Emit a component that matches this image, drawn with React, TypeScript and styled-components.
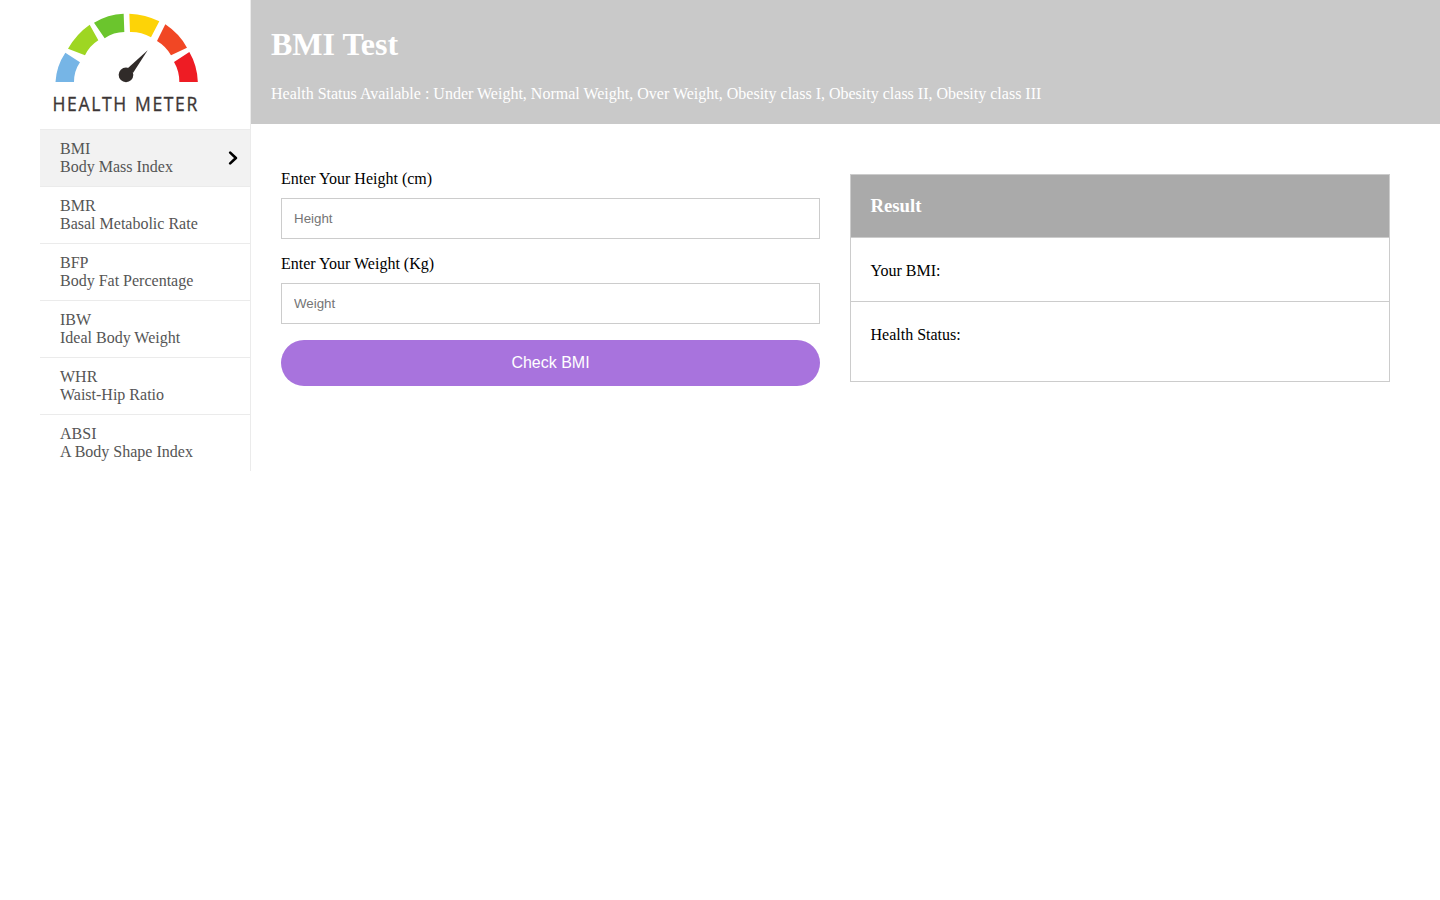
import React from "react";
import styled, { createGlobalStyle } from "styled-components";

const GlobalStyle = createGlobalStyle`
  *, *::before, *::after { box-sizing: border-box; }
  body { margin: 0; background: #fff; color: #000; font: 16px/18px "Liberation Serif", serif; }
`;

const Page = styled.div`
  display: flex;
  align-items: flex-start;
  padding-left: 40px;
`;

const Sidebar = styled.nav`
  flex: 0 0 211px;
  border-right: 1px solid #ebebeb;
`;

const LogoArt = styled.svg`
  display: block;
  width: 210px;
  height: 129px;
`;

const Menu = styled.ul`
  margin: 0;
  padding: 0;
  list-style: none;
`;

const MenuItem = styled.li<{ $active?: boolean }>`
  display: flex;
  align-items: center;
  justify-content: space-between;
  height: 57px;
  padding: 0 12px 0 20px;
  border-top: 1px solid #ebebeb;
  background: ${(p) => (p.$active ? "#f2f2f2" : "#fff")};
  color: #555;
`;

const ItemText = styled.span`
  white-space: pre-line;
`;

const Chevron = styled.svg`
  width: 10px;
  height: 14px;
  fill: none;
  stroke: #000;
  stroke-width: 2.6;
  stroke-linecap: round;
  stroke-linejoin: round;
`;

const Main = styled.main`
  flex: 1;
`;

const Banner = styled.header`
  height: 124px;
  padding: 26px 20px 0;
  background: #c9c9c9;
  color: #fff;
`;

const Title = styled.h1`
  margin: 0 0 23px;
  font-size: 32px;
  line-height: 36px;
`;

const Subtitle = styled.p`
  margin: 0;
`;

const Content = styled.div`
  display: grid;
  grid-template-columns: 539px 1fr;
  align-items: start;
  gap: 30px;
  padding: 46px 50px 0 30px;
`;

const Form = styled.form`
  display: flex;
  flex-direction: column;
`;

const Label = styled.label`
  display: block;
`;

const Input = styled.input`
  height: 41px;
  margin: 10px 0 16px;
  padding: 0 12px;
  border: 1px solid #ccc;
  font: 13.333px "Liberation Sans", sans-serif;
  outline: none;

  &::placeholder { color: #757575; }
`;

const Button = styled.button`
  height: 46px;
  border: 0;
  border-radius: 25px;
  background: #a873dd;
  color: #fff;
  font: 16px "Liberation Sans", sans-serif;
`;

const ResultCard = styled.section`
  margin-top: 4px;
  border: 1px solid #ccc;
`;

const ResultTitle = styled.h3`
  margin: 0;
  padding: 20px 19.5px;
  background: #aaa;
  color: #fff;
  font-size: 18.72px;
  line-height: 22px;
`;

const ResultRow = styled.div<{ $height: number }>`
  height: ${(p) => p.$height}px;
  padding: 24px 19.5px 0;
  border-top: 1px solid #ccc;
`;

const items = [
  ["BMI", "Body Mass Index"],
  ["BMR", "Basal Metabolic Rate"],
  ["BFP", "Body Fat Percentage"],
  ["IBW", "Ideal Body Weight"],
  ["WHR", "Waist-Hip Ratio"],
  ["ABSI", "A Body Shape Index"],
];

function Logo() {
  return (
    <LogoArt viewBox="0 0 630 387" role="img" aria-label="Health Meter">
      <path fill="#76b5e6" d="M46.500 246Q49 198 76 158L120 187Q102 213 102 246Z" />
      <path fill="#9ed622" d="M84 146Q109 102 149 74L175 121Q148 138 135 166Z" />
      <path fill="#6bc52d" d="M162 68Q203 43 251 41L253 96Q221 96 194 115Z" />
      <path fill="#fdd307" d="M268 41Q317 43 358 64L333 112Q303 95 270 96Z" />
      <path fill="#f14724" d="M376 73Q418 101 441 143L393 166Q378 139 351 123Z" />
      <path fill="#ee1c24" d="M448 156Q472 197 473.500 246H418Q418 213 402 186Z" />
      <circle cx="258" cy="224.500" r="22" fill="#302b29" />
      <path fill="#302b29" d="M323 151L264 204L279 219Z" />
      <text
        transform="scale(0.9 1)"
        y="333"
        fill="#3c3636"
        stroke="#3c3636"
        strokeWidth="1"
        fontFamily="Open Sans, sans-serif"
        fontSize="58.5"
        letterSpacing="5.3"
      >
        <tspan x="42">HEALTH </tspan>
        <tspan x="317">METER</tspan>
      </text>
    </LogoArt>
  );
}

export default function App() {
  return (
    <Page>
      <GlobalStyle />
      <Sidebar>
        <Logo />
        <Menu>
          {items.map(([code, name], i) => (
            <MenuItem key={code} $active={i === 0}>
              <ItemText>{code + "\n" + name}</ItemText>
              {i === 0 && (
                <Chevron viewBox="0 0 10 14" aria-hidden="true">
                  <path d="M2.2 1.6L7.9 7L2.2 12.4" />
                </Chevron>
              )}
            </MenuItem>
          ))}
        </Menu>
      </Sidebar>
      <Main>
        <Banner>
          <Title>BMI Test</Title>
          <Subtitle>
            Health Status Available : Under Weight, Normal Weight, Over Weight, Obesity class I, Obesity class II, Obesity class III
          </Subtitle>
        </Banner>
        <Content>
          <Form onSubmit={(e) => e.preventDefault()}>
            <Label htmlFor="height">Enter Your Height (cm)</Label>
            <Input id="height" placeholder="Height" />
            <Label htmlFor="weight">Enter Your Weight (Kg)</Label>
            <Input id="weight" placeholder="Weight" />
            <Button type="submit">Check BMI</Button>
          </Form>
          <ResultCard>
            <ResultTitle>Result</ResultTitle>
            <ResultRow $height={64}>Your BMI:</ResultRow>
            <ResultRow $height={80}>Health Status:</ResultRow>
          </ResultCard>
        </Content>
      </Main>
    </Page>
  );
}
